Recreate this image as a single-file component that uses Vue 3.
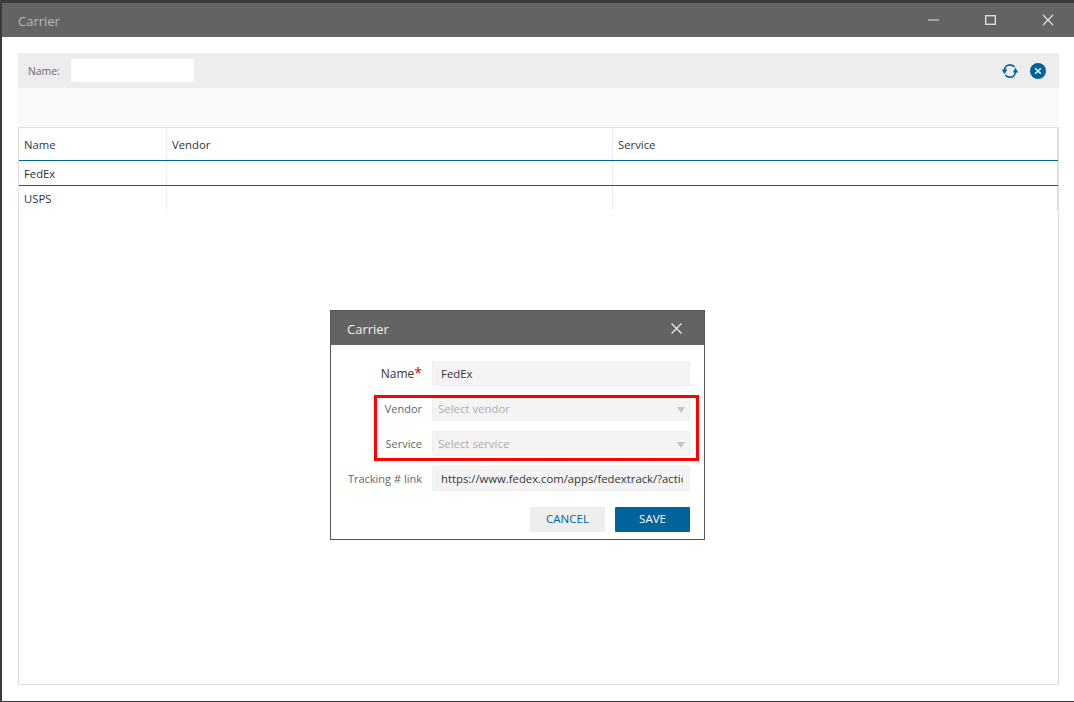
<script setup>
const columns = ['Name', 'Vendor', 'Service']
const rows = ['FedEx', 'USPS']
</script>

<template>
  <div class="window">
    <header class="titlebar">
      <span class="title">Carrier</span>
      <div class="controls">
        <svg width="14" height="14" viewBox="0 0 14 14"><path d="M2 7h11" stroke="#bdbdbd" stroke-width="1.4" /></svg>
        <svg width="14" height="14" viewBox="0 0 14 14"><rect x="2.7" y="2.7" width="9.6" height="8.6" fill="none" stroke="#dcdcdc" stroke-width="1.4" /></svg>
        <svg width="14" height="14" viewBox="0 0 14 14"><path d="M3 2l10 10M13 2L3 12" stroke="#e8e8e8" stroke-width="1.1" /></svg>
      </div>
    </header>

    <main class="content">
      <div class="panel">
        <div class="filter">
          <label class="filter-label">Name:</label>
          <div class="filter-input"></div>
          <div class="filter-actions">
            <svg width="18" height="16" viewBox="0 0 18 16" fill="none">
              <path d="M3.5 7C3.8 3.8 6.3 1.8 9 1.8c2 0 3.6.8 4.6 2.2" stroke="#00639a" stroke-width="1.7" />
              <path d="M14.5 9C14.2 12.2 11.7 14.2 9 14.2c-2 0-3.6-.8-4.6-2.2" stroke="#00639a" stroke-width="1.7" />
              <path d="M.8 6.5h5.4L3.5 11.2zM11.8 9.5h5.4L14.5 4.8z" fill="#00639a" />
            </svg>
            <svg width="16" height="16" viewBox="0 0 16 16">
              <circle cx="8" cy="8" r="8" fill="#00639a" />
              <path d="M5.2 5.2l5.6 5.6M10.8 5.2l-5.6 5.6" stroke="#fff" stroke-width="1.4" />
            </svg>
          </div>
        </div>
        <div class="band"></div>
        <div class="grid">
          <div class="grid-row grid-head">
            <div v-for="c in columns" :key="c" class="cell">{{ c }}</div>
          </div>
          <div v-for="(r, i) in rows" :key="r" class="grid-row" :class="i === 0 ? 'selected' : 'plain'">
            <div class="cell">{{ r }}</div>
            <div class="cell"></div>
            <div class="cell"></div>
          </div>
        </div>
      </div>
    </main>

    <section class="dialog">
      <header class="dialog-head">
        <span class="dialog-title">Carrier</span>
        <svg width="11" height="11" viewBox="0 0 11 11"><path d="M.5.5l10 10M10.5.5l-10 10" stroke="#f0f0f0" stroke-width="1.1" /></svg>
      </header>
      <div class="dialog-body">
        <div class="field">
          <label class="label strong">Name<em>*</em></label>
          <div class="control">FedEx</div>
        </div>
        <div class="field">
          <label class="label">Vendor</label>
          <div class="control disabled">Select vendor<i class="caret"></i></div>
        </div>
        <div class="field">
          <label class="label">Service</label>
          <div class="control disabled">Select service<i class="caret"></i></div>
        </div>
        <div class="field">
          <label class="label">Tracking # link</label>
          <div class="control clip"><span>https://www.fedex.com/apps/fedextrack/?action=track</span></div>
        </div>
        <div class="actions">
          <button class="btn cancel">CANCEL</button>
          <button class="btn save">SAVE</button>
        </div>
      </div>
      <div class="highlight"></div>
    </section>
  </div>
</template>

<style>
html, body { margin: 0; background: #fff; }
</style>

<style scoped>
.window {
  position: relative;
  width: 1074px;
  height: 702px;
  box-sizing: border-box;
  overflow: hidden;
  background: #fff;
  border-top: 3px solid #3a3a3a;
  border-left: 2px solid #3a3a3a;
  border-bottom: 1px solid #3a3a3a;
  font-family: "Open Sans", "Noto Sans", sans-serif;
  color: #333;
  display: flex;
  flex-direction: column;
}
.titlebar {
  height: 34px;
  flex: none;
  background: #636363;
  display: flex;
  align-items: center;
  justify-content: space-between;
  padding: 0 20px 0 16px;
}
.title { color: #b9b9b9; font-size: 13px; padding-top: 2px; }
.controls { display: flex; gap: 43px; }
.content { flex: 1; padding: 16px 15px 16px 16px; display: flex; min-height: 0; }
.panel {
  flex: 1;
  display: flex;
  flex-direction: column;
  border-right: 1px solid #dedede;
  border-bottom: 1px solid #dedede;
  border-left: 1px solid #dedede;
}
.filter {
  height: 35px;
  flex: none;
  background: #ededed;
  display: flex;
  align-items: center;
  padding: 0 13px 0 10px;
  margin: 0 -1px;
}
.filter-label { font-size: 10.4px; color: #666; width: 43px; }
.filter-input { width: 123px; height: 23px; background: #fff; border-radius: 2px; }
.filter-actions { margin-left: auto; display: flex; gap: 11px; align-items: center; }
.band { height: 39px; flex: none; background: #f9f9f9; margin: 0 -1px; border-bottom: 1px solid #e2e2e2; }
.grid { display: flex; flex-direction: column; }
.grid-row {
  display: grid;
  grid-template-columns: 148px 446px 1fr;
  font-size: 11.3px;
  color: #333;
}
.grid-head { height: 32px; border-bottom: 1px solid #00639a; }
.selected { height: 24px; border-bottom: 1px solid #00639a; }
.plain { height: 24px; }
.cell { padding-left: 5px; border-right: 1px solid #e9eef2; display: flex; align-items: center; }
.cell:last-child { border-right-color: #dedede; }

.dialog {
  position: absolute;
  left: 328px;
  top: 307px;
  width: 375px;
  height: 230px;
  box-sizing: border-box;
  background: #fff;
  border: 1px solid #555;
  display: flex;
  flex-direction: column;
}
.dialog-head {
  height: 34px;
  flex: none;
  background: #636363;
  color: #f0f0f0;
  font-size: 13px;
  display: flex;
  align-items: center;
  justify-content: space-between;
  padding: 0 22px 0 16px;
}
.dialog-title { padding-top: 2px; }
.dialog-body { padding: 16px 14px 0 0; display: flex; flex-direction: column; gap: 10px; }
.field { display: flex; align-items: center; height: 25px; }
.label { width: 91px; text-align: right; font-size: 11px; color: #666; flex: none; }
.label.strong { font-size: 12px; color: #333; }
.label em { color: #e00000; font-style: normal; font-size: 14px; line-height: 10px; }
.control {
  margin-left: 10px;
  flex: 1;
  min-width: 0;
  height: 25px;
  box-sizing: border-box;
  background: #f4f4f4;
  border: 1px solid #efefef;
  border-radius: 2px;
  padding: 0 8px;
  font-size: 11.4px;
  color: #333;
  display: flex;
  align-items: center;
}
.control.disabled { padding-left: 5px; color: #adadad; position: relative; }
.clip { overflow: hidden; white-space: nowrap; font-size: 11.3px; padding-right: 6px; }
.clip span { display: block; width: 100%; overflow: hidden; }
.caret {
  position: absolute;
  right: 4px;
  top: 10px;
  border-left: 4.5px solid transparent;
  border-right: 4.5px solid transparent;
  border-top: 6.5px solid #c4c4c4;
}
.actions { display: flex; justify-content: flex-end; gap: 10px; margin-top: 6px; }
.btn {
  width: 75px;
  height: 25px;
  border: 0;
  border-radius: 1px;
  padding: 0 0 2px;
  font: inherit;
  font-size: 11.5px;
}
.cancel { background: #eeeeee; color: #00639a; }
.save { background: #00639a; color: #fff; }
.highlight {
  position: absolute;
  left: 43px;
  top: 84px;
  width: 325px;
  height: 66px;
  box-sizing: border-box;
  border: 3px solid #ff0000;
  pointer-events: none;
}
</style>
